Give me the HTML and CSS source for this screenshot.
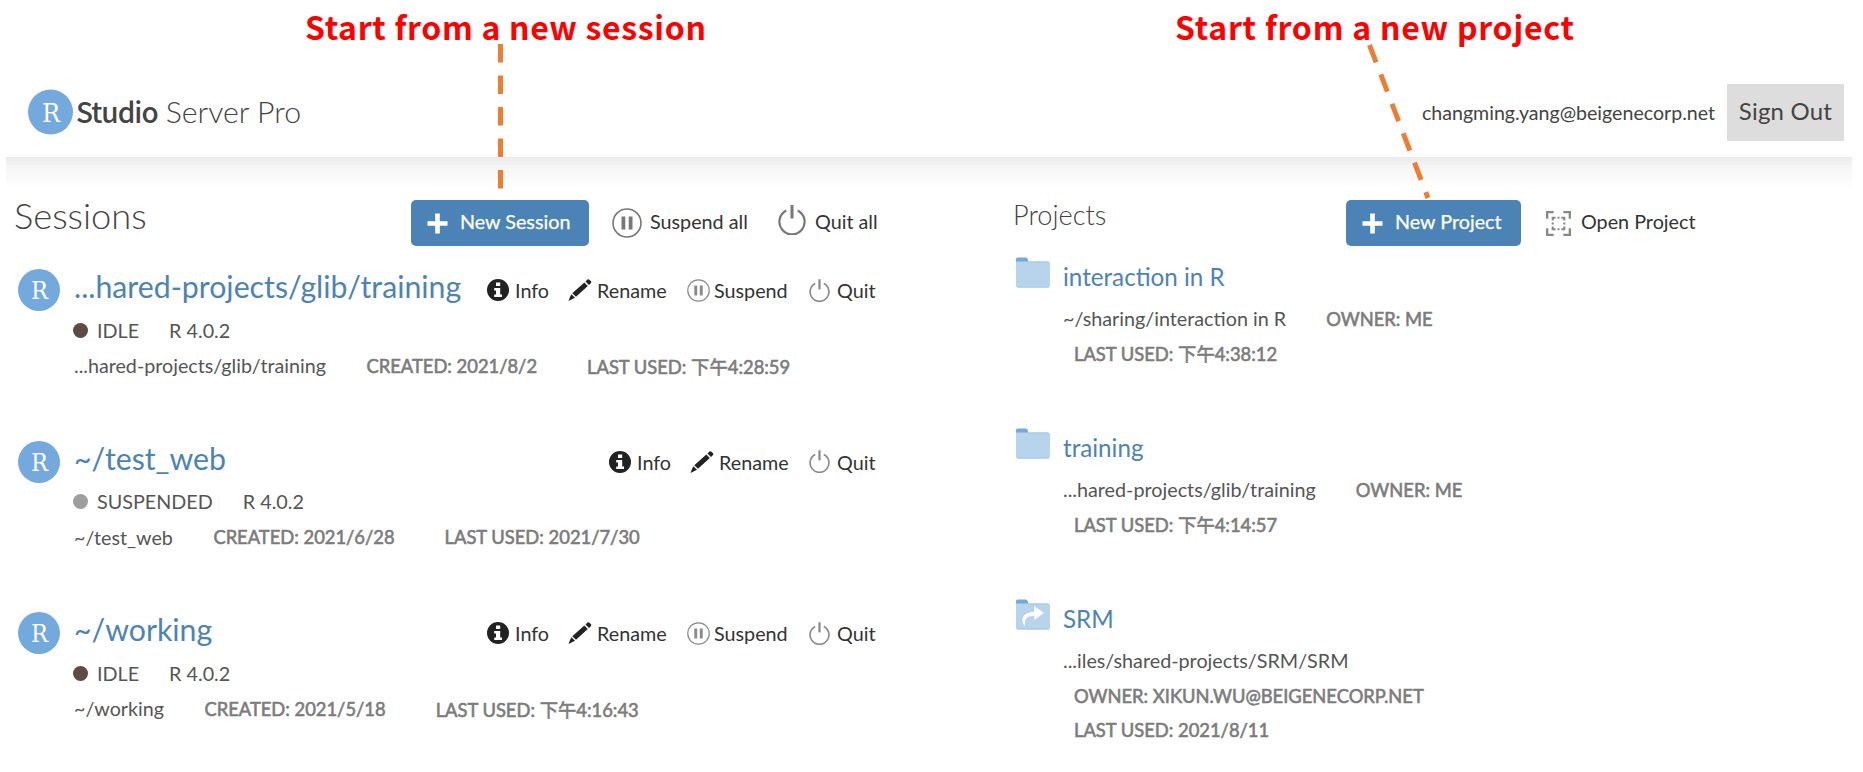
FILE: index.html
```html
<!DOCTYPE html>
<html lang="en">
<head>
<meta charset="utf-8">
<title>RStudio Server Pro</title>
<link rel="stylesheet" href="styles.css">
</head>
<body>
<svg class="defs" width="0" height="0">
  <symbol id="pause" viewBox="0 0 30 30"><circle cx="15" cy="15" r="14" fill="none" stroke="#777" stroke-width="1.6"/><path d="M9.500 8.500h3.800v13h-3.800zM16.700 8.500h3.800v13h-3.800z" fill="#777"/></symbol>
  <symbol id="power" viewBox="0 0 28 30"><path d="M8.300 5.600A12.600 12.600 0 1 0 19.700 5.600" fill="none" stroke="#777" stroke-width="2.200"/><path d="M14 0v13.500" stroke="#777" stroke-width="3"/></symbol>
  <symbol id="info" viewBox="0 0 22 22"><circle cx="11" cy="11" r="11" fill="#222"/><path d="M9 3.500h4.200v3.500H9zM7.200 9h6v6.500h1.800v2.500H7.200v-2.500H9v-4H7.200z" fill="#fff"/></symbol>
  <symbol id="pencil" viewBox="0 0 24 22"><path d="M17.500 2.500L19.500 0.500Q20.500-.3 21.500.7L23 2.300Q23.800 3.200 22.800 4.200L21 6zM16.300 3.600L19.800 7.100L8 17.800L4.300 14.200zM3.400 15.200L7 18.800L0.500 22L2 18z" fill="#222"/></symbol>
  <symbol id="plus" viewBox="0 0 21 21"><path d="M8.200 0.500h4.600v7.700h7.700v4.600h-7.700v7.700H8.200v-7.700H.5V8.200h7.700z" fill="#fff"/></symbol>
  <symbol id="folder" viewBox="0 0 34 31"><path d="M0 6V2Q0 .5 1.500.5H10Q11.500.5 12 3V6z" fill="#73a9dc"/><path d="M0 4.500H32Q34 4.500 34 6.500V28.500Q34 30.500 32 30.500H2Q0 30.500 0 28.500z" fill="#b8d3ec"/><path d="M12 5H32.500M1 30H33" stroke="#a2c6e8"/></symbol>
  <symbol id="open" viewBox="0 0 26 26"><g fill="none" stroke="#888" stroke-width="2.400"><path d="M1.200 8V1.200H8M18 1.200H24.800V8M24.800 18V24.800H18M8 24.800H1.200V18"/><path d="M7 10V7H10M16 7H19V10M19 16V19H16M10 19H7V16M7 12V14M12 7H14M19 12V14M12 19H14" stroke-width="2.200"/></g></symbol>
</svg>

<header class="header">
  <div class="brand"><svg class="brand-logo" viewBox="0 0 42 42"><circle cx="21" cy="21" r="21" fill="#73a9dc"/><text x="21.500" y="30" text-anchor="middle" class="rletter">R</text></svg><b class="studio">Studio</b><span class="server">Server Pro</span></div>
  <div class="account"><span class="email">changming.yang@beigenecorp.net</span><button class="signout">Sign Out</button></div>
</header>

<main class="main">
  <section class="sessions">
    <div class="bar">
      <h1 class="h-sessions">Sessions</h1>
      <div class="tools">
        <button class="btn btn-session"><svg class="i-plus"><use href="#plus"/></svg>New Session</button>
        <a class="tool suspend-all"><svg class="i-pause-lg"><use href="#pause"/></svg>Suspend all</a>
        <a class="tool quit-all"><svg class="i-power-lg"><use href="#power"/></svg>Quit all</a>
      </div>
    </div>

    <article class="session">
      <svg class="avatar" viewBox="0 0 42 42"><circle cx="21" cy="21" r="21" fill="#73a9dc"/><text x="21.500" y="30" text-anchor="middle" class="rletter">R</text></svg>
      <div class="body">
        <div class="title-row"><a class="title t1">...hared-projects/glib/training</a>
          <div class="actions">
            <a class="a-info"><svg class="i-info"><use href="#info"/></svg>Info</a><a class="a-rename"><svg class="i-pencil"><use href="#pencil"/></svg>Rename</a><a class="a-suspend"><svg class="i-pause"><use href="#pause"/></svg>Suspend</a><a class="a-quit"><svg class="i-power"><use href="#power"/></svg>Quit</a>
          </div></div>
        <div class="status"><i class="dot idle"></i><span>IDLE</span><span class="ver">R 4.0.2</span></div>
        <div class="meta"><span class="path">...hared-projects/glib/training</span><b class="created">CREATED: 2021/8/2</b><b class="used">LAST USED: 下午4:28:59</b></div>
      </div>
    </article>

    <article class="session">
      <svg class="avatar" viewBox="0 0 42 42"><circle cx="21" cy="21" r="21" fill="#73a9dc"/><text x="21.500" y="30" text-anchor="middle" class="rletter">R</text></svg>
      <div class="body">
        <div class="title-row"><a class="title">~/test_web</a>
          <div class="actions">
            <a class="a-info"><svg class="i-info"><use href="#info"/></svg>Info</a><a class="a-rename"><svg class="i-pencil"><use href="#pencil"/></svg>Rename</a><a class="a-quit"><svg class="i-power"><use href="#power"/></svg>Quit</a>
          </div></div>
        <div class="status"><i class="dot"></i><span>SUSPENDED</span><span class="ver">R 4.0.2</span></div>
        <div class="meta"><span class="path">~/test_web</span><b class="created">CREATED: 2021/6/28</b><b class="used">LAST USED: 2021/7/30</b></div>
      </div>
    </article>

    <article class="session">
      <svg class="avatar" viewBox="0 0 42 42"><circle cx="21" cy="21" r="21" fill="#73a9dc"/><text x="21.500" y="30" text-anchor="middle" class="rletter">R</text></svg>
      <div class="body">
        <div class="title-row"><a class="title">~/working</a>
          <div class="actions">
            <a class="a-info"><svg class="i-info"><use href="#info"/></svg>Info</a><a class="a-rename"><svg class="i-pencil"><use href="#pencil"/></svg>Rename</a><a class="a-suspend"><svg class="i-pause"><use href="#pause"/></svg>Suspend</a><a class="a-quit"><svg class="i-power"><use href="#power"/></svg>Quit</a>
          </div></div>
        <div class="status"><i class="dot idle"></i><span>IDLE</span><span class="ver">R 4.0.2</span></div>
        <div class="meta"><span class="path">~/working</span><b class="created">CREATED: 2021/5/18</b><b class="used">LAST USED: 下午4:16:43</b></div>
      </div>
    </article>
  </section>

  <section class="projects">
    <div class="bar">
      <h2 class="h-projects">Projects</h2>
      <div class="tools">
        <button class="btn btn-project"><svg class="i-plus"><use href="#plus"/></svg>New Project</button>
        <a class="tool open"><svg class="i-open"><use href="#open"/></svg>Open Project</a>
      </div>
    </div>

    <article class="project">
      <svg class="folder"><use href="#folder"/></svg>
      <div class="body">
        <a class="ptitle">interaction in R</a>
        <div class="pmeta"><span>~/sharing/interaction in R</span><b class="owner">OWNER: ME</b></div>
        <b class="pline">LAST USED: 下午4:38:12</b>
      </div>
    </article>
    <article class="project">
      <svg class="folder"><use href="#folder"/></svg>
      <div class="body">
        <a class="ptitle">training</a>
        <div class="pmeta"><span>...hared-projects/glib/training</span><b class="owner">OWNER: ME</b></div>
        <b class="pline">LAST USED: 下午4:14:57</b>
      </div>
    </article>
    <article class="project">
      <svg class="folder"><use href="#folder"/><path d="M9 27C3 20 8 13 18 13V7L28 14L18 21V17C11 16.500 8 20 9 27z" fill="#fff"/></svg>
      <div class="body">
        <a class="ptitle">SRM</a>
        <div class="pmeta"><span>...iles/shared-projects/SRM/SRM</span></div>
        <b class="pline">OWNER: XIKUN.WU@BEIGENECORP.NET</b>
        <b class="pline last">LAST USED: 2021/8/11</b>
      </div>
    </article>
  </section>
</main>

<svg class="notes" width="1863" height="200">
  <text x="305" y="40" textLength="401">Start from a new session</text>
  <text x="1175" y="40" textLength="399">Start from a new project</text>
  <path d="M500.500 44V189M1369.500 45L1428 198"/>
</svg>
</body>
</html>
```
FILE: styles.css
```css
* { box-sizing: border-box; }
body { margin: 0; width: 1863px; height: 772px; overflow: hidden; background: #fff; color: #444;
  font-family: Lato, "Noto Sans CJK SC", sans-serif; font-size: 19.75px; }
svg { flex: none; }
.defs { position: absolute; }
h1, h2 { margin: 0; font-weight: 300; }
button { border: 0; font: inherit; }

.notes { position: absolute; left: 0; top: 0; pointer-events: none; }
.notes text { font: 700 32px "Noto Sans CJK SC", sans-serif; fill: #f00; }
.notes path { fill: none; stroke: #ed7d31; stroke-width: 5; stroke-dasharray: 18.500 13; }
.rletter { font: 25px "DejaVu Serif Condensed", "DejaVu Serif", serif; font-stretch: condensed; fill: #fff; }

.header { height: 157px; padding: 67px 19px 0 28px; display: flex; justify-content: space-between; }
.brand { display: flex; height: 90px; align-items: center; }
.brand-logo { width: 45px; height: 46px; margin-right: 3px; }
.studio { font: 500 28px/86px "Noto Sans CJK SC", sans-serif; letter-spacing: -1px; margin: -2px 8px 0 0; }
.server { font-weight: 300; font-size: 30.3px; line-height: 88px; height: 90px; color: #444; }
.account { display: flex; height: 90px; align-items: center; }
.email { margin-right: 12px; color: #444; font-size: 19.6px; }
.signout { width: 117px; height: 57px; background: #ddd; font-size: 24px; color: #444; padding: 0 0 3px; letter-spacing: .2px; }

.main { display: grid; grid-template-columns: 1007px 1fr; margin: 0 11px 0 6px; height: 615px;
  background: linear-gradient(#ebebeb, #f7f7f7 12px, #fff 32px); }
.sessions { padding-left: 8px; }
.bar { display: flex; justify-content: space-between; height: 103px; padding-top: 43px; }
.sessions .bar { width: 863px; }
.projects .bar { width: 682px; height: 99px; }
.h-sessions { font-size: 36.3px; line-height: 44px; margin-top: -7px; }
.h-projects { font-size: 27.2px; line-height: 44px; margin-top: -7px; }
.tools { display: flex; height: 46px; }
.btn { display: flex; align-items: center; gap: 12px; height: 46px; padding: 0 0 3px 16px; border-radius: 5px;
  background: #4c83b6; color: #fff; -webkit-text-stroke: .25px #fff; }
.btn-session { width: 178px; }
.btn-project { width: 175px; }
.i-plus { width: 21px; height: 21px; margin-top: 3px; }
.tool { display: flex; align-items: center; color: #333; white-space: nowrap; padding-bottom: 3px; }
.suspend-all { margin-left: 23px; width: 166px; gap: 8px; }
.quit-all { width: 99px; gap: 9px; }
.i-pause-lg { width: 30px; height: 30px; margin-top: 3px; }
.i-power-lg { width: 28px; height: 30px; margin-bottom: 3px; }
.open { margin-left: 25px; width: 149px; gap: 10px; }
.i-open { width: 25px; height: 25px; margin-top: 3px; }

.session { display: flex; height: 171.500px; padding-left: 4px; }
.avatar { width: 42px; height: 42px; margin: 9px 14px 0 0; }
.session .body { width: 802px; }
.title-row { display: flex; justify-content: space-between; height: 53px; line-height: 53px; }
.title { font-size: 30.25px; color: #4c83b6; }
.actions { display: flex; margin-top: 4px; }
.actions a { display: flex; align-items: center; height: 53px; color: #333; white-space: nowrap; }
.a-info { width: 81px; gap: 6px; }
.a-rename { width: 119px; gap: 5px; }
.a-suspend { width: 122px; gap: 4px; }
.a-quit { width: 67px; gap: 7px; }
.i-info { width: 22px; height: 22px; margin-bottom: 1px; }
.i-pencil { width: 24px; height: 22px; margin-bottom: 1px; }
.i-pause, .i-power { height: 23px; margin-bottom: 1px; opacity: .85; }
.i-pause { width: 23px; }
.i-power { width: 21px; }
.status { display: flex; align-items: center; height: 34px; color: #555; }
.dot { width: 15px; height: 15px; border-radius: 50%; background: #9e9e9e; margin: 0 9px 0 -1px; }
.dot.idle { background: #5d4b45; }
.ver { margin-left: 30px; }
.meta { display: flex; align-items: center; height: 37px; white-space: nowrap; color: #555; font-size: 19.7px; }
.meta b, .owner, .pline { font-weight: 400; font-size: 18.35px; color: #7c7c7c; -webkit-text-stroke: .6px #7c7c7c; }
.created { margin-left: 40.500px; }
.used { margin-left: 50px; }

.project { display: flex; height: 171px; padding-left: 3px; }
.folder { width: 34px; height: 31px; margin: 1px 13px 0 0; }
.ptitle { display: block; height: 42px; line-height: 42px; font-size: 24.2px; color: #4c83b6; }
.pmeta { display: flex; align-items: center; height: 40px; color: #555; white-space: nowrap; font-size: 19.75px; }
.owner { margin: 1px 0 0 40px; }
.pline { display: block; height: 32px; line-height: 32px; margin-left: 11px; white-space: nowrap; }
.last { margin-top: 2px; }
```
